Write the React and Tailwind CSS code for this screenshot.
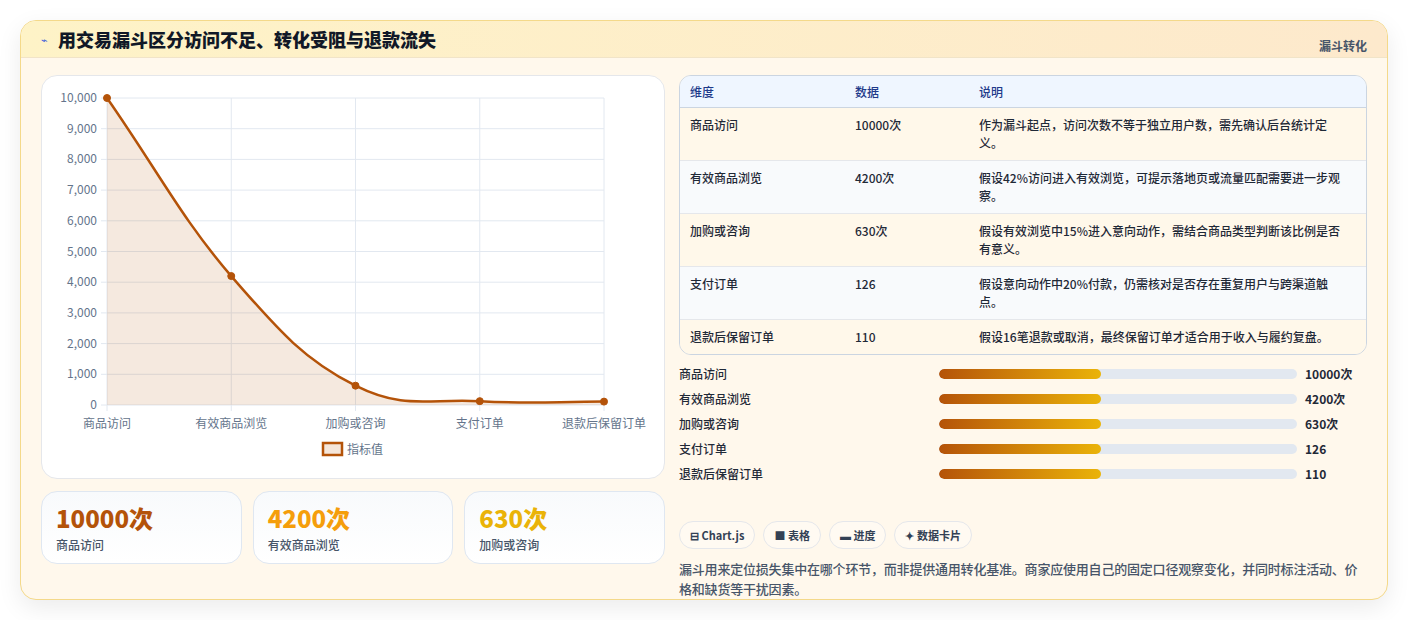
import React from "react";

const rows = [
  ["商品访问", "10000次", "作为漏斗起点，访问次数不等于独立用户数，需先确认后台统计定义。"],
  ["有效商品浏览", "4200次", "假设42%访问进入有效浏览，可提示落地页或流量匹配需要进一步观察。"],
  ["加购或咨询", "630次", "假设有效浏览中15%进入意向动作，需结合商品类型判断该比例是否有意义。"],
  ["支付订单", "126", "假设意向动作中20%付款，仍需核对是否存在重复用户与跨渠道触点。"],
  ["退款后保留订单", "110", "假设16笔退款或取消，最终保留订单才适合用于收入与履约复盘。"],
];

function Chart() {
  const x0 = 65, x1 = 562, yTop = 22, yBot = 329;
  const vals = [10000, 4200, 630, 126, 110];
  const xs = vals.map((_, i) => x0 + (i * (x1 - x0)) / 4);
  const ys = vals.map((v) => yBot - (v / 10000) * (yBot - yTop));
  let d = `M${xs[0]},${ys[0]}`;
  const t = 0.4;
  for (let i = 0; i < 4; i++) {
    const dx = (xs[i + 1] - xs[i]) * t;
    const s0 = i === 0 ? (ys[1] - ys[0]) / (xs[1] - xs[0]) : (ys[i + 1] - ys[i - 1]) / (xs[i + 1] - xs[i - 1]);
    const s1 = i === 3 ? 0 : (ys[i + 2] - ys[i]) / (xs[i + 2] - xs[i]);
    d += ` C${xs[i] + dx},${ys[i] + s0 * dx} ${xs[i + 1] - dx},${ys[i + 1] - s1 * dx} ${xs[i + 1]},${ys[i + 1]}`;
  }
  const area = d + ` L${x1},${yBot} L${x0},${yBot} Z`;
  const labels = ["商品访问", "有效商品浏览", "加购或咨询", "支付订单", "退款后保留订单"];
  return (
    <svg width="623" height="401" className="block" style={{ fontFamily: "'Noto Sans CJK SC', sans-serif" }}>
      {Array.from({ length: 11 }).map((_, i) => {
        const y = yBot - (i * (yBot - yTop)) / 10;
        return (
          <g key={i}>
            <line x1={x0 - 6} x2={x1} y1={y} y2={y} stroke="#e2e8f0" />
            <text x={x0 - 10} y={y + 4} textAnchor="end" fontSize="12" fill="#64748b">
              {(i * 1000).toLocaleString("en-US")}
            </text>
          </g>
        );
      })}
      {xs.map((x, i) => (
        <g key={i}>
          <line x1={x} x2={x} y1={yTop} y2={yBot + 6} stroke="#e2e8f0" />
          <text x={x} y={yBot + 23} textAnchor="middle" fontSize="12" fill="#64748b">{labels[i]}</text>
        </g>
      ))}
      <path d={area} fill="rgba(180,83,9,0.13)" />
      <path d={d} fill="none" stroke="#b45309" strokeWidth="2.5" />
      {xs.map((x, i) => (
        <circle key={i} cx={x} cy={ys[i]} r="3.5" fill="#b45309" stroke="#b45309" />
      ))}
      <rect x="281" y="367" width="19" height="12" fill="#f5e6da" stroke="#b45309" strokeWidth="2.5" />
      <text x="305" y="378" fontSize="12" fill="#64748b">指标值</text>
    </svg>
  );
}

export default function App() {
  return (
    <div className="w-[1408px] h-[620px] bg-white p-5" style={{ fontFamily: "'Noto Sans CJK SC', sans-serif" }}>
      <div className="h-[580px] rounded-2xl border border-[#f4d98a] bg-[#fff8ec] shadow-[0_8px_24px_rgba(0,0,0,0.08)] overflow-hidden flex flex-col">
        <div className="h-[55px] flex items-center justify-between px-5 bg-gradient-to-r from-[#fef3c7] to-[#fde9cc] border-b border-[#f1e4c8]">
          <div className="flex items-center gap-2.5">
            <span className="text-[11px] text-[#3b5bdb]">⌁</span>
            <span className="text-[18px] font-black text-[#111827]">用交易漏斗区分访问不足、转化受阻与退款流失</span>
          </div>
          <span className="text-[12px] font-bold text-[#475569] self-start mt-4">漏斗转化</span>
        </div>
        <div className="flex gap-[14px] px-5 pt-[17px]">
          <div className="w-[624px] flex flex-col gap-3">
            <div className="h-[404px] rounded-2xl border border-[#e5e7eb] bg-white overflow-hidden">
              <Chart />
            </div>
            <div className="grid grid-cols-3 gap-[11px]">
              {[
                ["10000次", "商品访问", "text-[#b45309]"],
                ["4200次", "有效商品浏览", "text-[#f59e0b]"],
                ["630次", "加购或咨询", "text-[#eab308]"],
              ].map(([v, l, c]) => (
                <div key={l} className="h-[73px] rounded-2xl border border-[#dfe7f1] bg-gradient-to-b from-[#f8fafc] to-white px-3.5 pt-2.5">
                  <div className={`text-[24px] font-extrabold leading-8 ${c}`}>{v}</div>
                  <div className="text-[12px] text-[#475569] font-medium mt-0.5">{l}</div>
                </div>
              ))}
            </div>
          </div>
          <div className="flex-1 flex flex-col">
            <div className="rounded-xl border border-[#cbd5e1] overflow-hidden text-[12px] font-medium">
              <div className="flex h-[32px] items-center bg-[#eff6ff] text-[#1e3a8a] border-b border-[#cbd5e1]">
                <div className="w-[175px] pl-2.5">维度</div>
                <div className="w-[124px]">数据</div>
                <div className="flex-1">说明</div>
              </div>
              {rows.map((r, i) => (
                <div key={i} className={`flex py-[8px] text-[#1f2937] leading-[18px] ${i ? "border-t border-[#e5e7eb]" : ""} ${i % 2 ? "bg-[#f8fafc]" : "bg-[#fff8ea]"}`}>
                  <div className="w-[175px] pl-2.5">{r[0]}</div>
                  <div className="w-[124px]">{r[1]}</div>
                  <div className="flex-1 pr-4">{r[2]}</div>
                </div>
              ))}
            </div>
            <div className="flex flex-col gap-[7px] mt-[10px]">
              {rows.map((r) => (
                <div key={r[0]} className="flex items-center h-[18px] text-[12px] font-medium text-[#1f2937]">
                  <div className="w-[260px]">{r[0]}</div>
                  <div className="w-[358px] h-[10px] rounded-full bg-[#e2e8f0] overflow-hidden">
                    <div className="w-[162px] h-full rounded-full bg-gradient-to-r from-[#b45309] to-[#eab308]" />
                  </div>
                  <div className="ml-2 font-bold">{r[1]}</div>
                </div>
              ))}
            </div>
            <div className="flex gap-2 mt-[38px]">
              {["⊟ Chart.js", "■ 表格", "▬ 进度", "✦ 数据卡片"].map((c) => (
                <span key={c} className="h-[28px] px-2.5 flex items-center rounded-full border border-[#e5e7eb] bg-[#fffaf2] text-[11px] font-bold text-[#334155]">{c}</span>
              ))}
            </div>
            <p className="mt-2.5 text-[13px] leading-5 font-medium text-[#475569] tracking-[-0.2px]">
              漏斗用来定位损失集中在哪个环节，而非提供通用转化基准。商家应使用自己的固定口径观察变化，并同时标注活动、价格和缺货等干扰因素。
            </p>
          </div>
        </div>
      </div>
    </div>
  );
}
